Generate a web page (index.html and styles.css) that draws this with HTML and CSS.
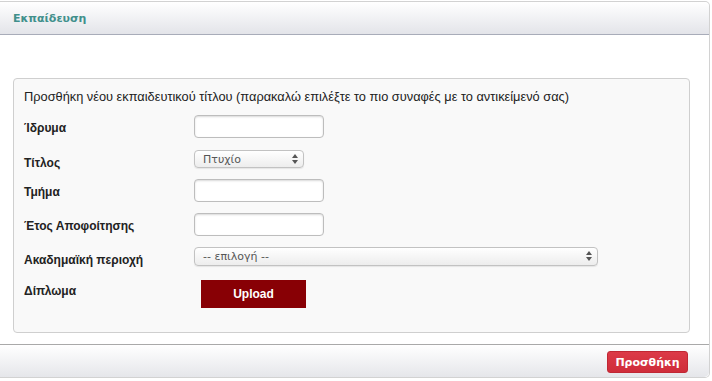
FILE: index.html
```html
<!DOCTYPE html>
<html lang="el">

<head>
    <meta charset="UTF-8">
    <meta name="viewport" content="width=device-width, initial-scale=1.0">
    <title>Εκπαίδευση</title>
    <link rel="stylesheet" href="styles.css">
</head>

<body>

    <div class="panel">
        <div class="panel-head">
            <h3 class="panel-title">Εκπαίδευση</h3>
        </div>

        <div class="panel-body">
            <div class="edu-box">
                <p class="intro">Προσθήκη νέου εκπαιδευτικού τίτλου (παρακαλώ επιλέξτε το πιο συναφές με το αντικείμενό σας)</p>

                <div class="form-row row-inst">
                    <label class="form-label">Ίδρυμα</label>
                    <input type="text" class="text-input">
                </div>

                <div class="form-row row-title">
                    <label class="form-label">Τίτλος</label>
                    <div class="select-wrap small">
                        <select class="select-input">
                            <option>Πτυχίο</option>
                            <option>Μεταπτυχιακό</option>
                            <option>Διδακτορικό</option>
                        </select>
                        <svg class="select-arrows" width="6" height="10" viewBox="0 0 6 10">
                            <path d="M3 0 L6 4 L0 4 Z M0 6 L6 6 L3 10 Z" fill="#555"/>
                        </svg>
                    </div>
                </div>

                <div class="form-row row-dept">
                    <label class="form-label">Τμήμα</label>
                    <input type="text" class="text-input">
                </div>

                <div class="form-row row-year">
                    <label class="form-label">Έτος Αποφοίτησης</label>
                    <input type="text" class="text-input">
                </div>

                <div class="form-row row-area">
                    <label class="form-label">Ακαδημαϊκή περιοχή</label>
                    <div class="select-wrap wide">
                        <select class="select-input">
                            <option>-- επιλογή --</option>
                        </select>
                        <svg class="select-arrows" width="6" height="10" viewBox="0 0 6 10">
                            <path d="M3 0 L6 4 L0 4 Z M0 6 L6 6 L3 10 Z" fill="#555"/>
                        </svg>
                    </div>
                </div>

                <div class="form-row row-file">
                    <label class="form-label">Δίπλωμα</label>
                    <button class="upload-btn">Upload</button>
                </div>
            </div>
        </div>

        <div class="panel-foot">
            <button class="add-btn">Προσθήκη</button>
        </div>
    </div>

</body>

</html>
```

FILE: styles.css
```css
body {
    margin: 0;
    background-color: white;
    font-family: "Liberation Sans", Arial, sans-serif;
    font-size: 12px;
    color: #222;
}

.panel {
    margin-top: 1px;
    width: 709px;
    border: 1px solid #d2d2d2;
    border-left: none;
    border-radius: 0 5px 5px 0;
    background: white;
}

.panel-head {
    height: 32px;
    border-bottom: 1px solid #a8acb9;
    background: linear-gradient(to bottom, #ffffff, #e3e4e9);
    border-radius: 0 5px 0 0;
    display: flex;
    align-items: center;
    padding-left: 13px;
}

.panel-title {
    margin: 0;
    font-family: "DejaVu Sans", sans-serif;
    font-size: 11px;
    font-weight: bold;
    color: #41908c;
}

.panel-body {
    padding: 43px 19px 11px 13px;
}

.edu-box {
    border: 1px solid #cfcfcf;
    border-radius: 4px;
    background: #f9f9f9;
    padding: 10px 10px 24px 10px;
}

.intro {
    margin: 0 0 10px 0;
    line-height: 16px;
    font-size: 12.8px;
}

.form-row {
    display: flex;
    align-items: flex-start;
}

.row-inst { height: 35px; }
.row-title { height: 29px; }
.row-dept { height: 34px; }
.row-year { height: 34px; }
.row-area { height: 33px; }

.form-label {
    width: 170px;
    flex-shrink: 0;
    padding-top: 2px;
    line-height: 23px;
    font-weight: bold;
}

.row-title .form-label,
.row-area .form-label {
    line-height: 22px;
}

.row-file .form-label {
    padding-top: 1px;
    line-height: 21px;
}

.text-input {
    width: 130px;
    height: 23px;
    box-sizing: border-box;
    margin: 0;
    border: 1px solid #bdbdbd;
    border-radius: 4px;
    background: white;
    box-shadow: inset 0 1px 2px rgba(0, 0, 0, 0.15);
    font: inherit;
    padding: 2px 6px;
}

.select-wrap {
    position: relative;
}

.select-wrap.small {
    width: 110px;
}

.select-wrap.wide {
    width: 404px;
}

.select-input {
    appearance: none;
    -webkit-appearance: none;
    width: 100%;
    height: 18px;
    box-sizing: border-box;
    margin: 0;
    border: 1px solid #c2c2c2;
    border-radius: 4px;
    background: linear-gradient(to bottom, #ffffff, #ededed);
    box-shadow: 0 1px 1px rgba(0, 0, 0, 0.08);
    padding: 0 0 0 8px;
    font-family: "DejaVu Sans", sans-serif;
    font-size: 11px;
    color: #555;
}

.select-wrap.wide .select-input {
    height: 19px;
}

.select-arrows {
    position: absolute;
    right: 6px;
    top: 4px;
    pointer-events: none;
}

.upload-btn {
    margin-left: 7px;
    width: 105px;
    height: 28px;
    border: none;
    background: #880005;
    color: white;
    font-family: "Liberation Sans", Arial, sans-serif;
    font-size: 12px;
    font-weight: bold;
    cursor: pointer;
}

.panel-foot {
    height: 32px;
    border-top: 1px solid #a9a9a9;
    background: linear-gradient(to bottom, #ffffff, #e5e6ea);
    border-radius: 0 0 5px 0;
    display: flex;
    justify-content: flex-end;
    align-items: center;
    padding-right: 21px;
}

.add-btn {
    width: 81px;
    height: 22px;
    border: 1px solid #c02734;
    border-radius: 3px;
    background: linear-gradient(to bottom, #dc3a47, #cf2c3a);
    color: white;
    font-family: "DejaVu Sans", sans-serif;
    font-size: 11px;
    font-weight: bold;
    cursor: pointer;
    margin-top: 2px;
}
```
